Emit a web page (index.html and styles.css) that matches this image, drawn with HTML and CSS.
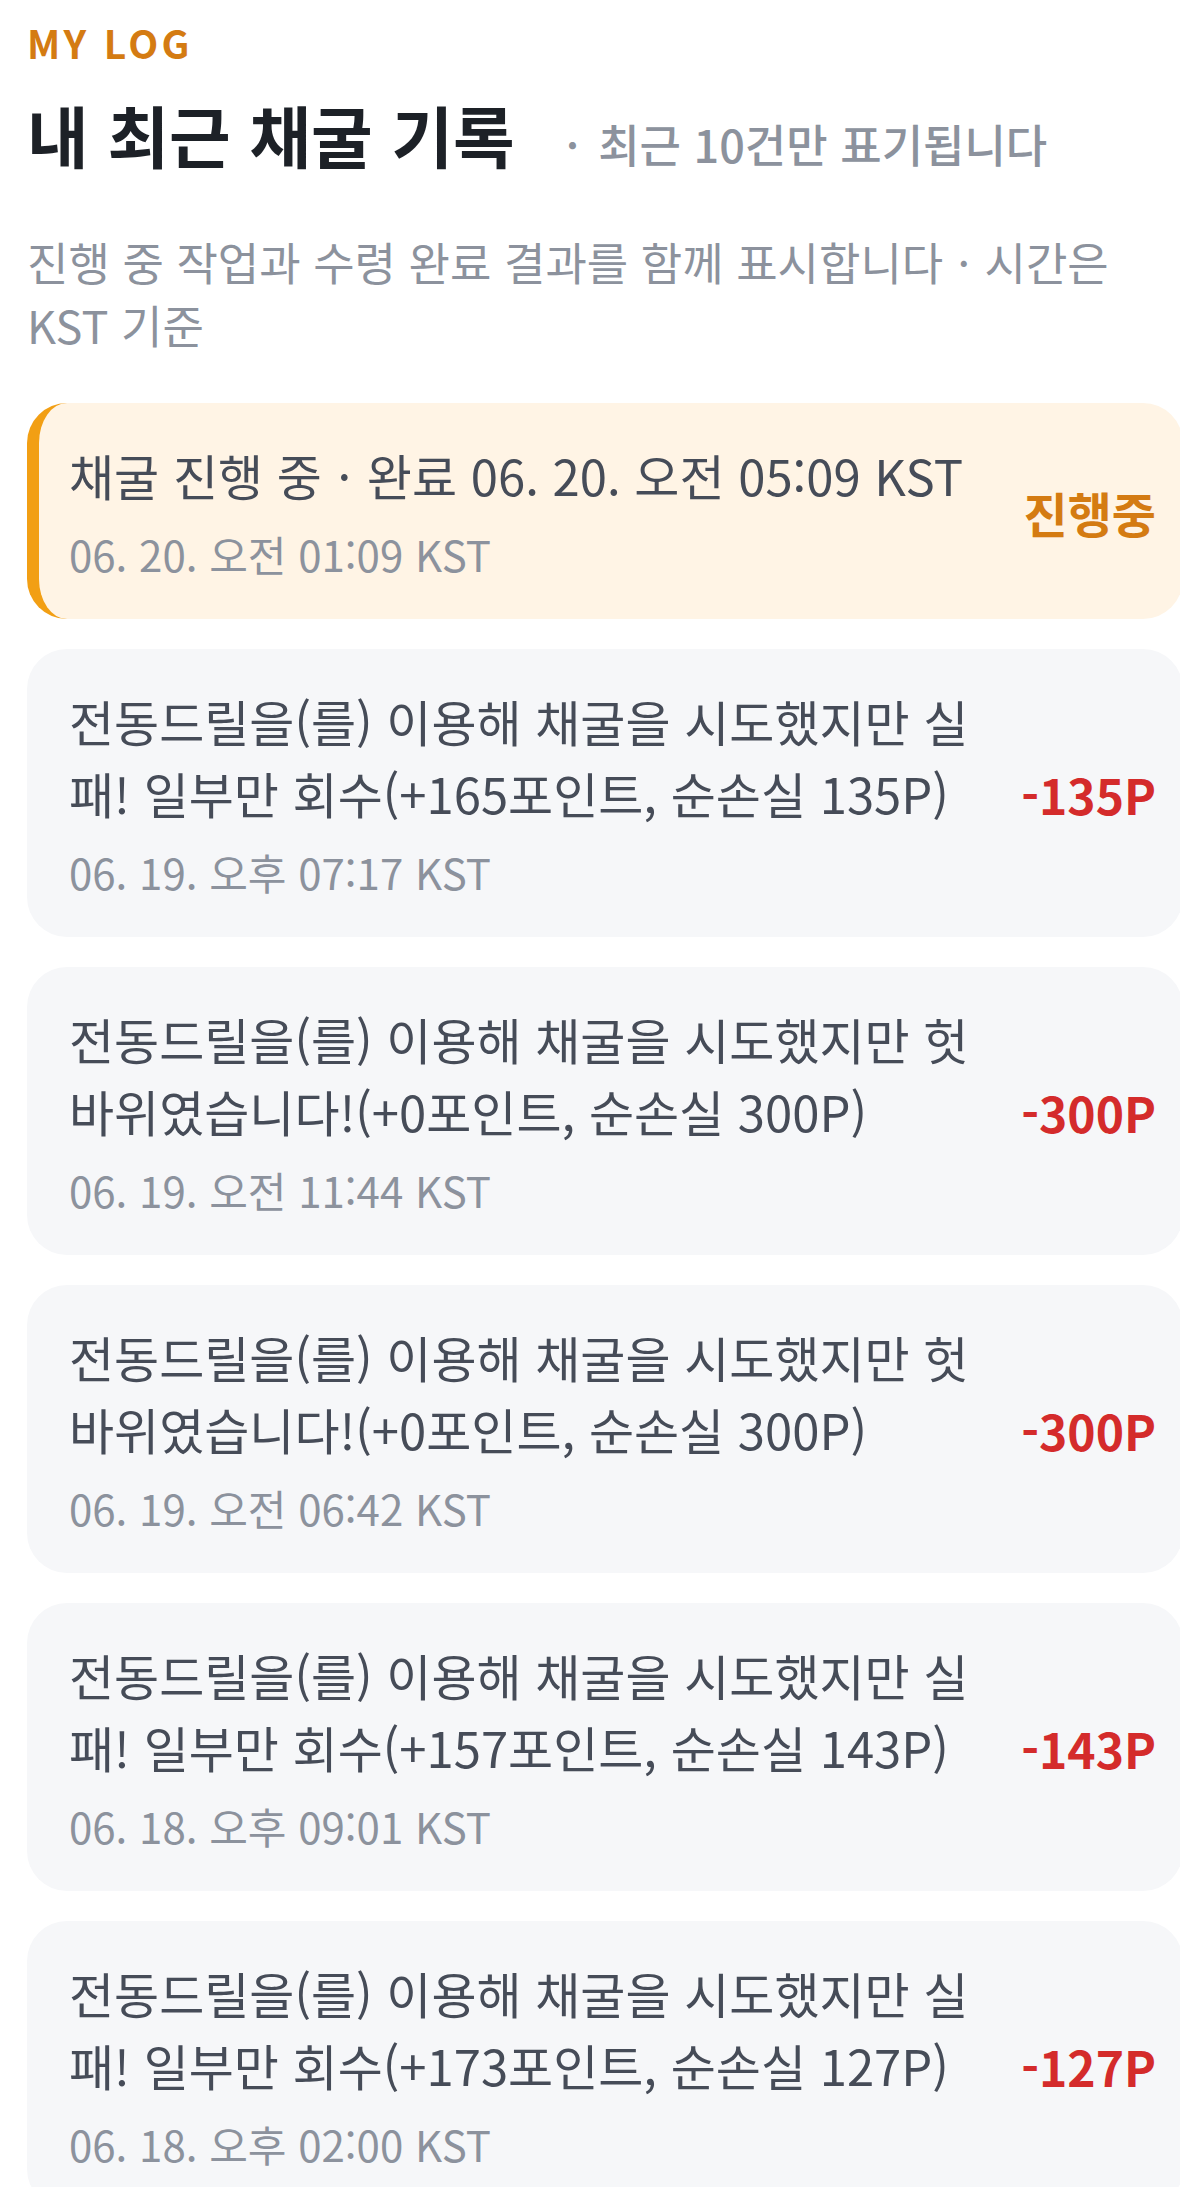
FILE: index.html
```html
<!DOCTYPE html>
<html lang="ko">
<head>
    <meta charset="UTF-8">
    <meta name="viewport" content="width=device-width, initial-scale=1.0">
    <title>My Log</title>
    <link rel="stylesheet" href="styles.css">
</head>
<body>
    <div class="page">
        <div class="eyebrow">MY LOG</div>
        <div class="title-row">
            <h1>내 최근 채굴 기록</h1>
            <span class="title-note"><span class="sep lead">·</span>최근 10건만 표기됩니다</span>
        </div>
        <p class="desc">진행 중 작업과 수령 완료 결과를 함께 표시합니다<span class="sep">·</span>시간은 KST 기준</p>

        <div class="log-list">
            <div class="log-item active">
                <div class="log-body">
                    <div class="log-text">채굴 진행 중<span class="sep">·</span>완료 06. 20. 오전 05:09 KST</div>
                    <div class="log-time">06. 20. 오전 01:09 KST</div>
                </div>
                <div class="log-amount pending">진행중</div>
            </div>
            <div class="log-item">
                <div class="log-body">
                    <div class="log-text">전동드릴을(를) 이용해 채굴을 시도했지만 실패! 일부만 회수(+165포인트, 순손실 135P)</div>
                    <div class="log-time">06. 19. 오후 07:17 KST</div>
                </div>
                <div class="log-amount loss">-135P</div>
            </div>
            <div class="log-item">
                <div class="log-body">
                    <div class="log-text">전동드릴을(를) 이용해 채굴을 시도했지만 헛바위였습니다!(+0포인트, 순손실 300P)</div>
                    <div class="log-time">06. 19. 오전 11:44 KST</div>
                </div>
                <div class="log-amount loss">-300P</div>
            </div>
            <div class="log-item">
                <div class="log-body">
                    <div class="log-text">전동드릴을(를) 이용해 채굴을 시도했지만 헛바위였습니다!(+0포인트, 순손실 300P)</div>
                    <div class="log-time">06. 19. 오전 06:42 KST</div>
                </div>
                <div class="log-amount loss">-300P</div>
            </div>
            <div class="log-item">
                <div class="log-body">
                    <div class="log-text">전동드릴을(를) 이용해 채굴을 시도했지만 실패! 일부만 회수(+157포인트, 순손실 143P)</div>
                    <div class="log-time">06. 18. 오후 09:01 KST</div>
                </div>
                <div class="log-amount loss">-143P</div>
            </div>
            <div class="log-item">
                <div class="log-body">
                    <div class="log-text">전동드릴을(를) 이용해 채굴을 시도했지만 실패! 일부만 회수(+173포인트, 순손실 127P)</div>
                    <div class="log-time">06. 18. 오후 02:00 KST</div>
                </div>
                <div class="log-amount loss">-127P</div>
            </div>
        </div>
    </div>
</body>
</html>
```

FILE: styles.css
```css
html, body {
    overflow-x: hidden;
}

body {
    margin: 0;
    background: #fff;
    font-family: "Noto Sans CJK KR", "Noto Sans", sans-serif;
    color: #464c58;
}

.page {
    padding: 19px 0 0 27px;
}

.eyebrow {
    font-size: 39px;
    line-height: 1.2;
    font-weight: 700;
    letter-spacing: 0.085em;
    color: #d47b12;
}

.title-row {
    display: flex;
    align-items: baseline;
    margin-top: 21px;
}

h1 {
    margin: 0;
    font-size: 67px;
    line-height: 94px;
    font-weight: 700;
    color: #1d2127;
}

.title-note {
    margin-left: 51px;
    font-size: 45px;
    font-weight: 500;
    color: #8c929d;
}

/* middle dot separators */
.sep {
    padding: 0 0.32em;
}

.sep.lead {
    padding: 0 0.42em 0 0;
}

.desc {
    max-width: 1110px;
    margin: 49px 0 0;
    font-size: 45px;
    line-height: 63px;
    color: #8c929d;
}

/* log cards */
.log-list {
    display: flex;
    flex-direction: column;
    gap: 30px;
    width: 1156px;
    margin-top: 47px;
}

.log-item {
    display: flex;
    align-items: center;
    padding: 36px 27px 34px 42px;
    background: #f6f7f9;
    border-radius: 40px;
}

.log-item.active {
    background: #fff4e5;
    border-left: 12px solid #f29f14;
    padding-left: 30px;
}

.log-body {
    flex: 1;
    min-width: 0;
}

.log-text {
    font-size: 49px;
    line-height: 72px;
}

.log-time {
    margin-top: 11px;
    font-size: 42px;
    line-height: 63px;
    color: #8c929d;
}

.log-amount {
    flex: 0 0 139px;
    margin-left: 37px;
    text-align: right;
    font-size: 48px;
    font-weight: 700;
}

.log-amount.pending {
    color: #d47b12;
}

.log-amount.loss {
    color: #d42b2b;
}
```
